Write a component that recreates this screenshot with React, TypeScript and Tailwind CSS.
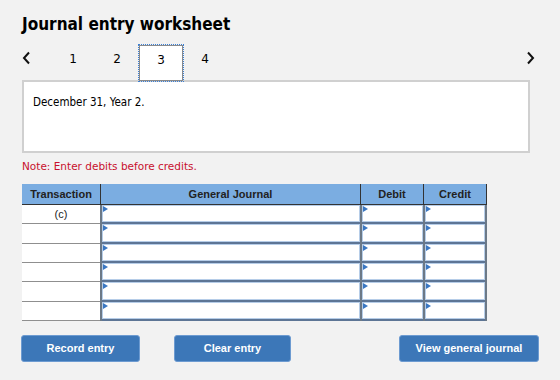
import React from "react";

const rows = ["(c)", "", "", "", "", ""];

function Marker() {
  return (
    <span className="absolute top-[1px] left-[1px] w-0 h-0 border-y-[3px] border-y-transparent border-l-[5px] border-l-[#3a77c2]"></span>
  );
}

function InputCell({ width, last }: { width: string; last?: boolean }) {
  return (
    <div
      className={`${width} h-full relative border-l-2 border-[#6c7987] ${
        last ? "border-r-2" : ""
      }`}
    >
      <div className="h-full border-b-2 border-[#5d7595]">
        <div className="h-full bg-white border border-[#b6cde8]"></div>
      </div>
      <Marker />
    </div>
  );
}

export default function App() {
  return (
    <div
      className="w-[560px] h-[380px] bg-[#f2f2f2] px-[22px] pt-[12px] text-[#222]"
      style={{ fontFamily: '"DejaVu Sans", Verdana, sans-serif' }}
    >
      <h1
        className="text-[17px] font-bold leading-[24px] text-black"
        style={{ fontFamily: '"DejaVu Sans Condensed", "DejaVu Sans", sans-serif' }}
      >
        Journal entry worksheet
      </h1>

      <div className="flex items-stretch h-[35px] mt-[9px] text-[12px] text-black">
        <div className="w-[29px] flex items-center pb-[9px]">
          <svg width="9" height="14" viewBox="0 0 9 14">
            <path d="M7 1.5 L2 7 L7 12.5" fill="none" stroke="#111" strokeWidth="2" />
          </svg>
        </div>
        {["1", "2", "3", "4"].map((t) => (
          <div
            key={t}
            className={`w-[44px] flex items-center justify-center pb-[7px] ${
              t === "3"
                ? "bg-white border border-[#8a8a8a] outline-1 outline-dotted outline-[#3b7fd4] -mb-[1px] relative z-10"
                : ""
            }`}
          >
            {t}
          </div>
        ))}
        <div className="flex-1"></div>
        <div className="w-[12px] flex items-center pb-[9px]">
          <svg width="9" height="14" viewBox="0 0 9 14">
            <path d="M2 1.5 L7 7 L2 12.5" fill="none" stroke="#111" strokeWidth="2" />
          </svg>
        </div>
      </div>

      <div
        className="w-[508px] h-[73px] bg-white border-2 border-[#d0d0d0] px-[9px] pt-[12px] text-[11.5px] text-black"
        style={{ fontFamily: '"DejaVu Sans Condensed", "DejaVu Sans", sans-serif' }}
      >
        December 31, Year 2.
      </div>

      <p className="mt-[6px] text-[10.5px] leading-[14px] text-[#c8102e]">
        Note: Enter debits before credits.
      </p>

      <div
        className="mt-[11px] w-[465px]"
        style={{ fontFamily: '"Liberation Sans", Arial, sans-serif' }}
      >
        <div className="flex h-[21px] bg-[#7bade1] border-b border-[#333] text-[11px] font-bold text-[#222]">
          <div className="w-[78px] flex items-center justify-center">Transaction</div>
          <div className="w-[260px] flex items-center justify-center border-l border-[#333]">
            General Journal
          </div>
          <div className="w-[63px] flex items-center justify-center border-l border-[#333]">
            Debit
          </div>
          <div className="w-[64px] flex items-center justify-center border-l border-[#333] border-r">
            Credit
          </div>
        </div>
        {rows.map((r, i) => (
          <div key={i} className="flex h-[19.33px]">
            <div className="w-[78px] h-full bg-white border-b border-[#8f8f8f] flex items-center justify-center text-[11px] text-[#222]">
              {r}
            </div>
            <InputCell width="w-[260px]" />
            <InputCell width="w-[63px]" />
            <InputCell width="w-[64px]" last />
          </div>
        ))}
      </div>

      <div
        className="mt-[14px] flex text-[11px] font-bold text-white"
        style={{ fontFamily: '"Liberation Sans", Arial, sans-serif' }}
      >
        <button className="w-[119px] h-[27px] -ml-[1px] bg-[#3c77b8] border border-[#6d9bd1] rounded-[3px]">
          Record entry
        </button>
        <button className="w-[117px] h-[27px] ml-[34px] bg-[#3c77b8] border border-[#6d9bd1] rounded-[3px]">
          Clear entry
        </button>
        <div className="flex-1"></div>
        <button className="w-[140px] h-[27px] -mr-[1px] bg-[#3c77b8] border border-[#6d9bd1] rounded-[3px]">
          View general journal
        </button>
      </div>
    </div>
  );
}
